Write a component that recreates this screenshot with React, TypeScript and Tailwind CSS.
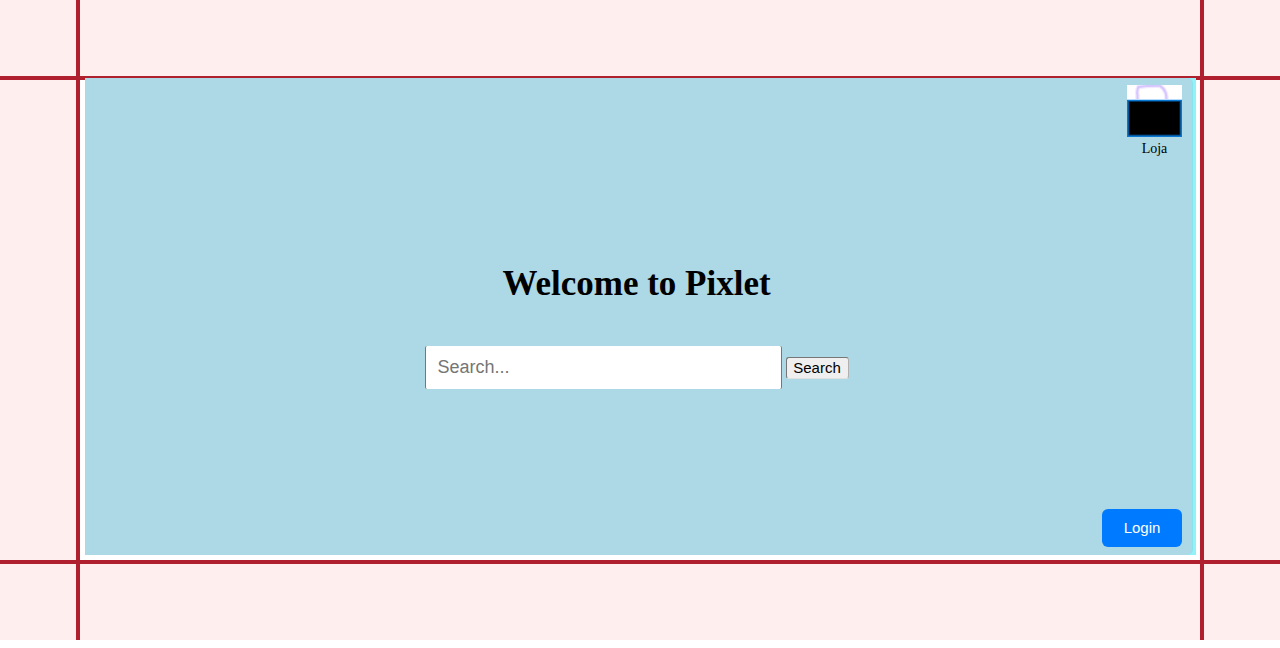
function ShopIcon() {
  return (
    <svg viewBox="0 0 55 52" className="h-[52px] w-[55px]" aria-hidden="true">
      <rect width="55" height="52" fill="#ffffff" />
      <path
        d="M10.5 15 L10.5 10 Q9.5 6 11.5 2 Q20 0.5 33 0.8 Q36.5 3 38 6.5 Q39.5 9 39.5 15"
        fill="none"
        stroke="#ccb5ff"
        strokeOpacity="0.3"
        strokeWidth="4.5"
      />
      <path
        d="M10.5 15 L10.5 10 Q9.5 6 11.5 2 Q20 0.5 33 0.8 Q36.5 3 38 6.5 Q39.5 9 39.5 15"
        fill="none"
        stroke="#ccb5ff"
        strokeOpacity="0.7"
        strokeWidth="2"
      />
      <rect y="14" width="55" height="1" fill="#b9dcfb" />
      <rect y="15" width="55" height="37" fill="#0878d4" />
      <rect x="1.5" y="16" width="52" height="34.5" fill="#03345e" />
      <rect x="2.5" y="17" width="50" height="32.5" fill="#000000" />
    </svg>
  );
}

function Band({ className }: { className: string }) {
  return (
    <div className={`flex h-20 border-[#b01f2e] bg-[#ffeeee] ${className}`}>
      <div className="w-20 border-r-4 border-[#b01f2e]" />
      <div className="flex-1" />
      <div className="w-20 border-l-4 border-[#b01f2e]" />
    </div>
  );
}

export default function App() {
  return (
    <div className="bg-white text-black">
      <Band className="border-b-4" />
      <div className="flex">
        <div className="w-20 border-r-4 border-[#b01f2e] bg-[#ffeeee]" />
        <main className="-mt-0.5 mr-1 mb-[5px] ml-[5px] flex-1 bg-[#93f1f9] pr-[3px]">
          <div className="flex min-h-[477px] flex-col justify-between rounded-r-md border-r border-[#86e5ec] bg-[#add8e6] pt-[7px] pr-[10px] pb-2">
            <a
              href="#loja"
              className="flex flex-col items-center gap-1 self-end font-['Liberation_Serif',serif] text-sm leading-4"
            >
              <ShopIcon />
              Loja
            </a>
            <div className="flex flex-col items-center gap-[42px] pb-[14px] pl-[6px]">
              <h1 className="font-['Liberation_Serif',serif] text-[35px] leading-10 font-bold">
                Welcome to Pixlet
              </h1>
              <form className="flex items-center gap-1" onSubmit={(e) => e.preventDefault()}>
                <input
                  type="text"
                  aria-label="Search"
                  placeholder="Search..."
                  className="h-[43px] w-[357px] rounded-xs border-x border-[#767676] bg-white px-3 font-['Liberation_Sans',sans-serif] text-lg placeholder:text-[#757575]"
                />
                <button
                  type="submit"
                  className="mt-px h-[22px] w-[63px] rounded-[3px] border border-r-[#b0b0b0] border-b-[#e0e0e0] border-t-[#767676] border-l-[#767676] bg-[#efefef] font-['Liberation_Sans',sans-serif] text-[15px] leading-5"
                >
                  Search
                </button>
              </form>
            </div>
            <button
              type="button"
              className="h-[38px] w-20 self-end rounded-md bg-[#007bff] font-['Liberation_Sans',sans-serif] text-[15px] text-white"
            >
              Login
            </button>
          </div>
        </main>
        <div className="w-20 border-l-4 border-[#b01f2e] bg-[#ffeeee]" />
      </div>
      <Band className="border-t-4" />
    </div>
  );
}
